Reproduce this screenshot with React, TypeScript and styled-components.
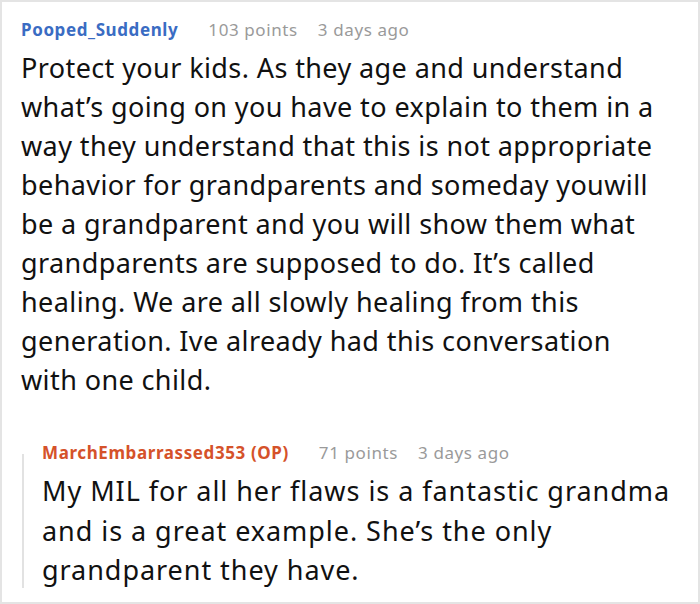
import React from 'react'
import styled, { createGlobalStyle } from 'styled-components'

const GlobalStyle = createGlobalStyle`
    html, body {
        margin: 0;
        padding: 0;
        background: #fff;
    }
    body {
        font-family: "Noto Sans", "Open Sans", sans-serif;
    }
`

const Frame = styled.div`
    box-sizing: border-box;
    width: 700px;
    height: 604px;
    border: 2px solid #e4e4e4;
    padding: 16px 33px 0 19px;
    background: #fff;
    overflow: hidden;
`

const CommentBlock = styled.div`
    display: flex;
    flex-direction: column;
`

const MetaRow = styled.div`
    display: flex;
    align-items: baseline;
    font-size: 17px;
    line-height: 24px;
    letter-spacing: 0.6px;
    white-space: nowrap;
`

const Author = styled.span<{ $tone: 'blue' | 'orange' }>`
    font-weight: 700;
    color: ${p => (p.$tone === 'blue' ? '#3a6cc3' : '#d5522a')};
    margin-right: 10px;
`

const MetaItem = styled.span`
    color: #9a9a9a;
    margin-left: 20px;
`

const Body = styled.p<{ $gap: number; $spacing: number; $leading: number }>`
    margin: ${p => p.$gap}px 0 0 0;
    font-size: 27px;
    letter-spacing: ${p => p.$spacing}px;
    line-height: ${p => p.$leading}px;
    color: #111;
`

const ReplyWrap = styled.div`
    display: grid;
    grid-template-columns: 2px 1fr;
    column-gap: 18px;
    margin: 42px -18px 0 0;
    padding-left: 1px;
`

const ReplyRule = styled.div`
    background: #e2e2e2;
    margin-top: 13px;
    margin-bottom: 2px;
`

const Comment = ({ author, tone, points, age, text, gap, spacing, leading }: any) => (
    <CommentBlock>
        <MetaRow>
            <Author $tone={tone}>{author}</Author>
            <MetaItem>{points} points</MetaItem>
            <MetaItem>{age}</MetaItem>
        </MetaRow>
        <Body $gap={gap} $spacing={spacing} $leading={leading}>{text}</Body>
    </CommentBlock>
)

export default function App() {
    return (
        <>
            <GlobalStyle />
            <Frame>
                <Comment
                    author="Pooped_Suddenly"
                    tone="blue"
                    points={103}
                    age="3 days ago"
                    gap={6}
                    spacing={0.4}
                    leading={39}
                    text="Protect your kids. As they age and understand what’s going on you have to explain to them in a way they understand that this is not appropriate behavior for grandparents and someday youwill be a grandparent and you will show them what grandparents are supposed to do. It’s called healing. We are all slowly healing from this generation. Ive already had this conversation with one child."
                />
                <ReplyWrap>
                    <ReplyRule />
                    <Comment
                        author="MarchEmbarrassed353 (OP)"
                        tone="orange"
                        points={71}
                        age="3 days ago"
                        gap={6}
                        spacing={0.95}
                        leading={39.5}
                        text="My MIL for all her flaws is a fantastic grandma and is a great example. She’s the only grandparent they have."
                    />
                </ReplyWrap>
            </Frame>
        </>
    )
}
